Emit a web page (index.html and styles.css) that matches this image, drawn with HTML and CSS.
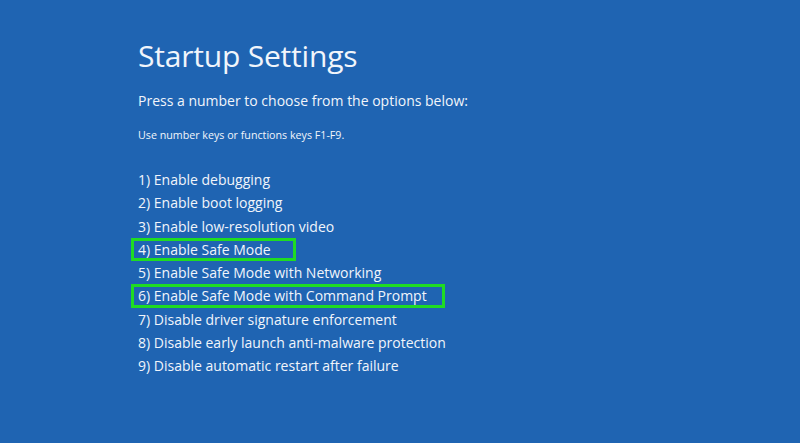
FILE: index.html
```html
<!DOCTYPE html>
<html>
<head>
<meta charset="utf-8">
<link rel="stylesheet" href="styles.css">
</head>
<body>
<main class="screen">
  <h1 class="title">Startup Settings</h1>
  <p class="lead">Press a number to choose from the options below:</p>
  <p class="hint">Use number keys or functions keys F1-F9.</p>
  <ol class="options">
    <li class="option">1) Enable debugging</li>
    <li class="option">2) Enable boot logging</li>
    <li class="option">3) Enable low-resolution video</li>
    <li class="option"><span class="mark mark-short">4) Enable Safe Mode</span></li>
    <li class="option">5) Enable Safe Mode with Networking</li>
    <li class="option"><span class="mark mark-long">6) Enable Safe Mode with Command Prompt</span></li>
    <li class="option">7) Disable driver signature enforcement</li>
    <li class="option">8) Disable early launch anti-malware protection</li>
    <li class="option">9) Disable automatic restart after failure</li>
  </ol>
</main>
</body>
</html>
```
FILE: styles.css
```css
html, body {
  margin: 0;
  padding: 0;
  background: #1f64b2;
}
.screen {
  width: 800px;
  height: 443px;
  box-sizing: border-box;
  padding: 36px 0 0 138px;
  color: #f1f5fb;
  font-family: "Open Sans", "Noto Sans", sans-serif;
  overflow: hidden;
}
.title {
  margin: 0;
  font-weight: 400;
  font-size: 30px;
  line-height: 40px;
  letter-spacing: -0.2px;
}
.lead {
  margin: 15px 0 0;
  font-size: 14px;
  line-height: 20px;
}
.hint {
  margin: 17px 0 0;
  font-size: 10.7px;
  line-height: 14px;
}
.options {
  list-style: none;
  margin: 26px 0 0;
  padding: 0;
  display: flex;
  flex-direction: column;
}
.option {
  height: 23.25px;
  font-size: 14px;
  line-height: 23.25px;
  white-space: nowrap;
}
.mark {
  display: block;
  box-sizing: border-box;
  height: 23.5px;
  margin-left: -7px;
  padding-left: 4px;
  border: 3px solid #1fdc22;
  line-height: 17.5px;
}
.mark-short { width: 165px; }
.mark-long { width: 314px; }
```
